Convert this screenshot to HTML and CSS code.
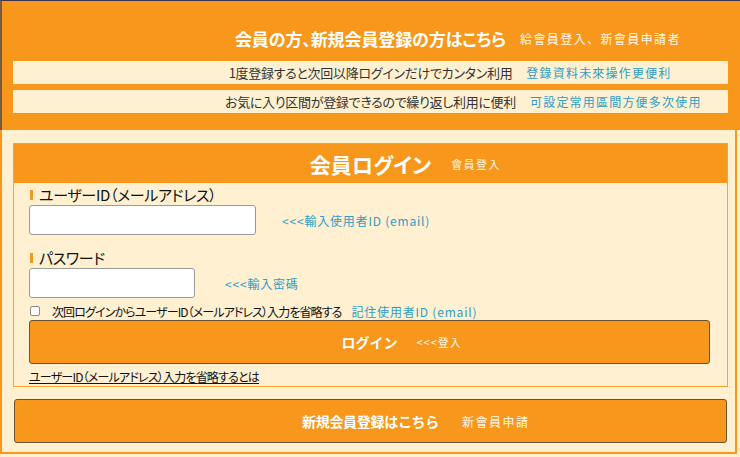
FILE: index.html
```html
<!DOCTYPE html>
<html lang="ja">
<head>
<meta charset="utf-8">
<title>会員ログイン</title>
<link rel="stylesheet" href="styles.css">
</head>
<body>
<div class="page">
  <header class="band">
    <div class="line heading"><span class="ja">会員の方、新規会員登録の方はこちら</span><span class="zh">給會員登入、新會員申請者</span></div>
    <div class="line note"><span class="ja">1度登録すると次回以降ログインだけでカンタン利用</span><span class="zh">登錄資料未來操作更便利</span></div>
    <div class="line note"><span class="ja">お気に入り区間が登録できるので繰り返し利用に便利</span><span class="zh">可設定常用區間方便多次使用</span></div>
  </header>
  <main class="content">
    <section class="login">
      <h2 class="line login-head"><span class="ja">会員ログイン</span><span class="zh">會員登入</span></h2>
      <div class="login-body">
        <div class="field-label">ユーザーID（メールアドレス）</div>
        <div class="field-row"><input class="input input-id" type="text"><span class="hint">&lt;&lt;&lt;輸入使用者ID (email)</span></div>
        <div class="field-label second">パスワード</div>
        <div class="field-row"><input class="input input-pw" type="password"><span class="hint">&lt;&lt;&lt;輸入密碼</span></div>
        <label class="remember"><input class="check" type="checkbox"><span class="remember-text">次回ログインからユーザーID（メールアドレス）入力を省略する</span><span class="hint">記住使用者ID (email)</span></label>
        <button class="line btn btn-login" type="button"><span class="ja">ログイン</span><span class="zh">&lt;&lt;&lt;登入</span></button>
        <a class="about" href="#">ユーザーID（メールアドレス）入力を省略するとは</a>
      </div>
    </section>
    <button class="line btn btn-register" type="button"><span class="ja">新規会員登録はこちら</span><span class="zh">新會員申請</span></button>
  </main>
</div>
</body>
</html>
```
FILE: styles.css
```css
html, body {
  margin: 0;
  padding: 0;
  background: #fef0d0;
}
body {
  font-family: "Noto Sans CJK JP", "Noto Sans", sans-serif;
  font-feature-settings: "palt";
  color: #222;
  width: 740px;
  height: 457px;
  overflow: hidden;
}
.page {
  box-sizing: border-box;
  width: 737px;
  height: 454px;
  border: 2px solid #f7981d;
  border-top: 0;
  background: #fef0d0;
}
.band {
  margin: 0 -5px 0 -2px;
  background: #f7981d;
  border-top: 1px solid #3b3550;
  border-left: 2px solid #7a5a3c;
  padding: 25px 12px 17px 11px;
}
.line {
  display: grid;
  grid-template-columns: 1fr auto 1fr;
  align-items: center;
}
.line .ja {
  grid-column: 2;
  white-space: nowrap;
}
.line .zh {
  grid-column: 3;
  justify-self: start;
  white-space: nowrap;
  font-family: "Noto Sans CJK TC", sans-serif;
  font-feature-settings: normal;
  font-weight: 400;
}
.heading {
  height: 22px;
  color: #fff;
}
.heading .ja {
  font-size: 17px;
  font-weight: 700;
  letter-spacing: -0.1px;
}
.heading .zh {
  margin-left: 14px;
  font-size: 12px;
  letter-spacing: 1.4px;
  color: #fff6e6;
}
.note {
  height: 23px;
  background: #fef1d2;
  margin-top: 6px;
  font-size: 13px;
  letter-spacing: -0.3px;
  color: #333;
}
.heading + .note {
  margin-top: 13px;
}
.note .zh {
  margin-left: 14px;
  font-size: 12px;
  letter-spacing: 1.2px;
  color: #2f9cc8;
}
.content {
  padding: 13px 7px 0 11px;
}
.login {
  border: 1px solid #f6a332;
}
.login-head {
  margin: 0;
  height: 39px;
  background: #f7981d;
  color: #fff;
}
.login-head .ja {
  font-size: 21px;
  font-weight: 700;
}
.login-head .zh {
  margin-left: 20px;
  font-size: 11px;
  letter-spacing: 1.5px;
  color: #fff6e6;
}
.login-body {
  padding: 0 15px;
}
.field-label {
  display: flex;
  align-items: center;
  gap: 6px;
  margin-top: 2px;
  height: 18px;
  font-size: 15px;
  letter-spacing: -0.35px;
  color: #111;
}
.field-label::before {
  content: "";
  width: 3px;
  height: 10px;
  background: #f7981d;
  margin: 2px 0 0 1px;
}
.field-label.second {
  margin-top: 13px;
}
.field-row {
  display: flex;
  align-items: center;
  margin-top: 2px;
}
.input {
  box-sizing: border-box;
  height: 30px;
  border: 1px solid #9a9a9a;
  border-radius: 3px;
  background: #fff;
  margin: 0;
}
.input-id {
  width: 227px;
}
.input-pw {
  width: 166px;
}
.hint {
  font-family: "Noto Sans CJK TC", sans-serif;
  font-feature-settings: normal;
  font-size: 12px;
  letter-spacing: 0.8px;
  color: #2f9cc8;
  white-space: nowrap;
}
.input-id + .hint {
  margin-left: 26px;
}
.input-pw + .hint {
  margin-left: 30px;
}
.remember {
  display: flex;
  align-items: center;
  height: 18px;
  margin-top: 4px;
  font-size: 12px;
  color: #111;
}
.remember-text {
  letter-spacing: -0.9px;
}
.check {
  appearance: none;
  -webkit-appearance: none;
  box-sizing: border-box;
  width: 10px;
  height: 10px;
  margin: 0 12px 0 1px;
  border: 1px solid #8a8a8a;
  border-radius: 2px;
  background: #fff;
}
.remember .hint {
  margin-left: 10px;
}
.btn {
  box-sizing: border-box;
  width: 681px;
  height: 44px;
  margin: 0;
  padding: 0;
  border: 1px solid #6a5234;
  border-radius: 3px;
  background: #f7981d;
  color: #fff;
  font-family: inherit;
  cursor: pointer;
}
.btn .ja {
  font-weight: 700;
}
.btn-login .ja {
  font-size: 14px;
}
.btn-login .zh {
  margin-left: 19px;
  font-size: 11px;
  letter-spacing: 1px;
  color: #fff6e6;
}
.about {
  display: block;
  margin-top: 4px;
  height: 18px;
  line-height: 18px;
  font-size: 12px;
  letter-spacing: -0.8px;
  color: #111;
  text-decoration: underline;
}
.btn-register {
  width: 713px;
  margin: 12px 1px 0;
}
.btn-register .ja {
  font-size: 14px;
  letter-spacing: -0.3px;
}
.btn-register .zh {
  margin-left: 23px;
  font-size: 12px;
  letter-spacing: 1.5px;
  color: #fff6e6;
}
```
